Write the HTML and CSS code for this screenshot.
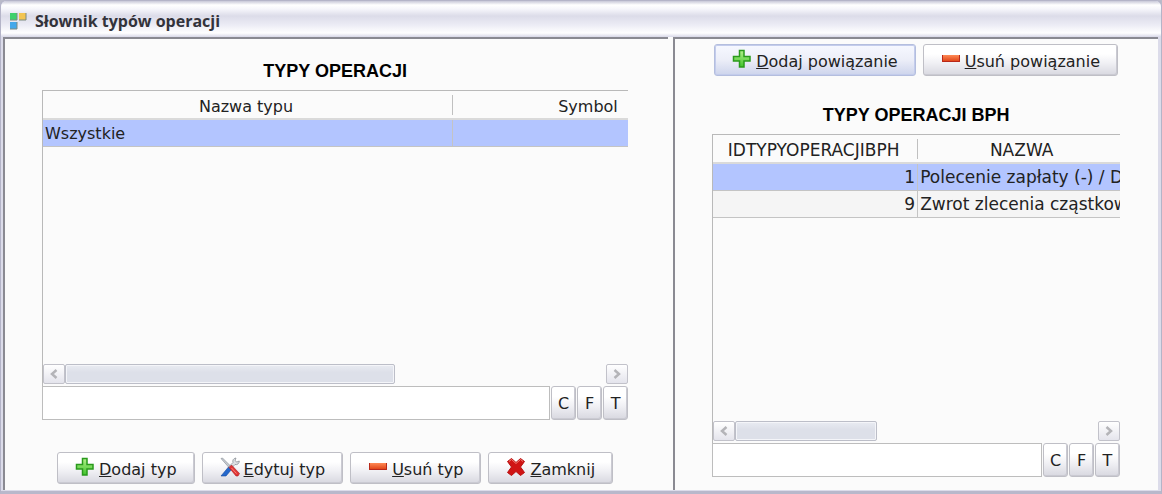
FILE: index.html
```html
<!DOCTYPE html>
<html lang="pl">

<head>
    <meta charset="UTF-8">
    <meta name="viewport" content="width=device-width, initial-scale=1.0">
    <title>Słownik typów operacji</title>
    <link rel="stylesheet" href="styles.css">
</head>

<body>
    <!-- wspólne ikony przycisków -->
    <svg class="defs" width="0" height="0" aria-hidden="true">
        <defs>
            <linearGradient id="green" x1="0" y1="0" x2="0" y2="1">
                <stop offset="0" stop-color="#b4f08c" />
                <stop offset="1" stop-color="#3fc42a" />
            </linearGradient>
            <linearGradient id="red" x1="0" y1="0" x2="0" y2="1">
                <stop offset="0" stop-color="#ff8a55" />
                <stop offset="1" stop-color="#dc3c10" />
            </linearGradient>
            <symbol id="icon-plus" viewBox="0 0 20 20">
                <path d="M7.5 1.500h4.500v6h6v4.500h-6v6h-4.500v-6h-6v-4.500h6z" fill="url(#green)" stroke="#2a9a1c" stroke-width="1.5" />
            </symbol>
            <symbol id="icon-minus" viewBox="0 0 20 20">
                <path d="M1 6h18v7h-18z" fill="url(#red)" />
                <path d="M1.500 6v6.500h17v-6.500" fill="none" stroke="#b8281a" />
            </symbol>
            <symbol id="icon-close" viewBox="0 0 20 20">
                <path d="M1.500 4.500L5.500 1.500L10 5.500L14.500 1.500L18.500 4.500L14.500 10L18.500 15.500L14.500 18.500L10 14.500L5.500 18.500L1.500 15.500L5.500 10z" fill="#d01414" stroke="#b81010" stroke-linejoin="round" />
                <path d="M3 4.500l2.500-2L10 6.500L14.500 2.500L17 4.500" fill="none" stroke="#f07a70" />
            </symbol>
            <symbol id="icon-tools" viewBox="0 0 20 20">
                <path d="M1 1.500l1.500-.5l8 8l-1.500 1.500z" fill="#c8ccd2" stroke="#80868e" stroke-width=".6" />
                <path d="M10 8.500l3-3c-.7-2 .3-4.200 3-4.500l-1 2.500l1.800 1.500l2.500-1c0 2.500-2 4.200-4.300 3.500l-3 3z" fill="#dde0e4" stroke="#8b9097" stroke-width=".8" />
                <path d="M8.500 10l3 2.500l-5.500 6.500h-5z" fill="#2468cc" stroke="#164a9c" stroke-width=".6" />
                <path d="M9 10.500l2.500-2.500l8 8.500l-1.500 2.500h-2z" fill="#e03434" stroke="#a81c24" stroke-width=".6" />
                <path d="M11.500 11l5 5.500" stroke="#ff9a90" stroke-width=".8" />
            </symbol>
            <symbol id="arrow-left" viewBox="0 0 10 12">
                <path d="M7.500 2L3 6l4.500 4" fill="none" stroke="#b4b4b8" stroke-width="2.500" />
            </symbol>
            <symbol id="arrow-right" viewBox="0 0 10 12">
                <path d="M2.500 2L7 6l-4.500 4" fill="none" stroke="#b4b4b8" stroke-width="2.500" />
            </symbol>
        </defs>
    </svg>

    <div class="window">
        <header class="titlebar">
            <svg class="logo" viewBox="0 0 18 18" aria-hidden="true">
                <path d="M1 1h7v7h-7z" fill="#3fd06c" />
                <path d="M10 1h7v7h-7z" fill="#f3c552" />
                <path d="M1 10h7v7h-7z" fill="#44a8ea" />
                <path d="M1 8h7v-7M10 8h7v-7M1 17h7v-7" fill="none" stroke="#7d8a80" />
            </svg>
            <h1>Słownik typów operacji</h1>
        </header>

        <main class="panels">
            <section class="panel panel-types">
                <h2>TYPY OPERACJI</h2>
                <div class="grid">
                    <div class="grid-view">
                        <table class="types">
                            <colgroup>
                                <col class="col-name">
                                <col class="col-symbol">
                            </colgroup>
                            <thead>
                                <tr>
                                    <th>Nazwa typu</th>
                                    <th>Symbol</th>
                                </tr>
                            </thead>
                            <tbody>
                                <tr class="selected">
                                    <td>Wszystkie</td>
                                    <td></td>
                                </tr>
                            </tbody>
                        </table>
                    </div>
                    <div class="scrollbar">
                        <button type="button" class="arrow" aria-label="W lewo"><svg><use href="#arrow-left" /></svg></button>
                        <div class="track"><div class="thumb thumb-types"></div></div>
                        <button type="button" class="arrow" aria-label="W prawo"><svg><use href="#arrow-right" /></svg></button>
                    </div>
                </div>
                <div class="filter">
                    <input type="text" aria-label="Filtr typów operacji">
                    <button type="button">C</button>
                    <button type="button">F</button>
                    <button type="button">T</button>
                </div>
                <div class="actions">
                    <button type="button" class="btn"><svg><use href="#icon-plus" /></svg><span><u>D</u>odaj typ</span></button>
                    <button type="button" class="btn"><svg><use href="#icon-tools" /></svg><span><u>E</u>dytuj typ</span></button>
                    <button type="button" class="btn"><svg><use href="#icon-minus" /></svg><span><u>U</u>suń typ</span></button>
                    <button type="button" class="btn"><svg><use href="#icon-close" /></svg><span><u>Z</u>amknij</span></button>
                </div>
            </section>

            <section class="panel panel-bph">
                <div class="actions">
                    <button type="button" class="btn active"><svg><use href="#icon-plus" /></svg><span><u>D</u>odaj powiązanie</span></button>
                    <button type="button" class="btn"><svg><use href="#icon-minus" /></svg><span><u>U</u>suń powiązanie</span></button>
                </div>
                <h2>TYPY OPERACJI BPH</h2>
                <div class="grid">
                    <div class="grid-view">
                        <table class="bph">
                            <colgroup>
                                <col class="col-id">
                                <col class="col-label">
                            </colgroup>
                            <thead>
                                <tr>
                                    <th>IDTYPYOPERACJIBPH</th>
                                    <th>NAZWA</th>
                                </tr>
                            </thead>
                            <tbody>
                                <tr class="selected">
                                    <td class="num">1</td>
                                    <td>Polecenie zapłaty (-) / D</td>
                                </tr>
                                <tr>
                                    <td class="num">9</td>
                                    <td>Zwrot zlecenia cząstkow</td>
                                </tr>
                            </tbody>
                        </table>
                    </div>
                    <div class="scrollbar">
                        <button type="button" class="arrow" aria-label="W lewo"><svg><use href="#arrow-left" /></svg></button>
                        <div class="track"><div class="thumb thumb-bph"></div></div>
                        <button type="button" class="arrow" aria-label="W prawo"><svg><use href="#arrow-right" /></svg></button>
                    </div>
                </div>
                <div class="filter">
                    <input type="text" aria-label="Filtr typów operacji BPH">
                    <button type="button">C</button>
                    <button type="button">F</button>
                    <button type="button">T</button>
                </div>
            </section>
        </main>
    </div>
</body>

</html>
```
FILE: styles.css
```css
* {
    box-sizing: border-box;
}

body {
    margin: 0;
    font-family: "DejaVu Sans", Verdana, sans-serif;
    font-size: 16px;
    color: #222;
    background-color: #b9bac9;
}

.defs {
    position: absolute;
}

.window {
    display: flex;
    flex-direction: column;
    min-height: 100vh;
    padding: 0 3px 1px 2px;
    background-color: #dcdcea;
    border: 1px solid #b4b4c8;
    border-bottom: 3px solid #b8b8cb;
    border-radius: 6px 6px 0 0;
}

.titlebar {
    display: flex;
    align-items: center;
    gap: 8px;
    height: 36px;
    margin: 0 -3px 0 -2px;
    padding: 3px 8px 0;
    background: linear-gradient(#c8c8d8 0, #ffffff 4px, #f6f6fb 8px, #dcdce9 15px, #ececf5 24px, #ffffff 32px, #d8d8e8 100%);
    border-radius: 6px 6px 0 0;
}

.logo {
    width: 18px;
    height: 18px;
}

h1 {
    margin: 0;
    font-family: "Open Sans", "Trebuchet MS", sans-serif;
    font-size: 16px;
    line-height: 20px;
    color: #33333b;
}

.panels {
    display: grid;
    grid-template-columns: 664fr 484fr;
    flex: 1;
    gap: 5px;
    background-color: #fbfbfb;
}

.panel {
    display: flex;
    flex-direction: column;
    min-width: 0;
    background-color: #fbfbfb;
    border-top: 2px solid #8a8a92;
    border-left: 2px solid #8a8a92;
}

.panel-types {
    padding: 20px 40px 6px 37px;
}

.panel-bph {
    padding: 5px 38px 13px 37px;
}

h2 {
    margin: 0;
    font-family: "Liberation Sans", Arial, sans-serif;
    font-size: 18px;
    line-height: 24px;
    text-align: center;
    color: #000;
}

.grid {
    display: flex;
    flex-direction: column;
    flex: 1;
    margin-top: 7px;
    border-top: 1px solid #b9b9b9;
    border-left: 1px solid #b9b9b9;
}

.grid-view {
    flex: 1;
    overflow: hidden;
}

table {
    table-layout: fixed;
    border-collapse: separate;
    border-spacing: 0;
}

.types {
    width: 684px;
}

.bph {
    width: 416px;
    font-size: 17px;
}

.col-name {
    width: 410px;
}

.col-id {
    width: 205px;
}

th,
td {
    padding: 0 2px;
    white-space: nowrap;
    overflow: hidden;
    border-bottom: 1px solid #c4c4c4;
}

th {
    height: 29px;
    padding: 3px 6px 0 2px;
    font-weight: normal;
    background: linear-gradient(#c0c0c0, #c0c0c0) right 4px / 1px 20px no-repeat;
    border-bottom: 2px solid #dadada;
}

th:last-child {
    background: none;
}

td {
    height: 27px;
    background-color: #f5f5f5;
    border-right: 1px solid #c4c4c4;
}

.selected td {
    background-color: #b3c5ff;
}

.num {
    text-align: right;
}

.scrollbar {
    display: flex;
    height: 22px;
}

.arrow {
    display: flex;
    align-items: center;
    justify-content: center;
    width: 22px;
    height: 20px;
    padding: 0;
    background: linear-gradient(#fff, #e4e4ec);
    border: 1px solid #c2c2ca;
    border-radius: 2px;
}

.arrow svg {
    width: 10px;
    height: 12px;
}

.track {
    flex: 1;
}

.thumb {
    height: 20px;
    background: linear-gradient(#e9ebf2, #dde0e9 40%);
    border: 1px solid #bcbec8;
    border-radius: 2px;
    box-shadow: inset 0 0 0 1px #f4f5f9;
}

.thumb-types {
    width: 61%;
}

.thumb-bph {
    width: 39%;
}

.filter {
    display: flex;
    gap: 1px;
    height: 34px;
}

.filter input {
    flex: 1;
    min-width: 0;
    padding: 0 4px;
    font: inherit;
    background-color: #fff;
    border: 1px solid #bdbdbd;
}

.filter button {
    width: 25px;
    padding: 0;
}

.btn,
.filter button {
    font: inherit;
    color: #222;
    background: linear-gradient(#ffffff 30%, #f0f0f4 60%, #d8d8e0);
    border: 1px solid #bfbfc6;
    border-radius: 3px;
    box-shadow: inset -1px -1px 0 #cacad2;
}

.actions {
    display: flex;
    justify-content: center;
    gap: 7px;
}

.panel-types .actions {
    margin-top: 32px;
}

.panel-bph h2 {
    margin-top: 27px;
}

.btn {
    display: flex;
    align-items: center;
    gap: 4px;
    height: 32px;
    padding: 2px 17px 0;
    white-space: nowrap;
}

.btn svg {
    width: 20px;
    height: 20px;
    margin-bottom: 4px;
}

.btn.active {
    background: linear-gradient(#f6f8ff, #eceef8 50%, #cdd4ec);
    border-color: #b4bede;
    box-shadow: inset 0 0 0 1px #c3ccec;
}

.btn:hover,
.filter button:hover {
    border-color: #9aa6d0;
}
```
